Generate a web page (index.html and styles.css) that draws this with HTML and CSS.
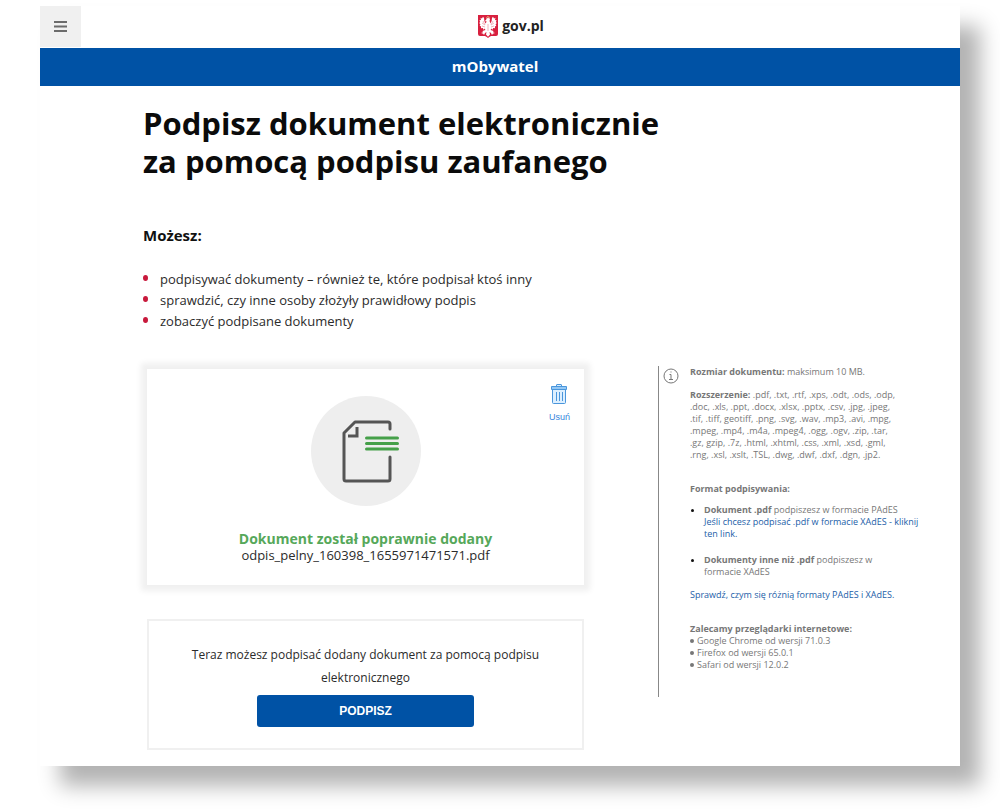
FILE: index.html
```html
<!DOCTYPE html>
<html lang="pl">
<head>
  <meta charset="UTF-8">
  <meta name="viewport" content="width=device-width, initial-scale=1">
  <title>Podpisz dokument elektronicznie - mObywatel</title>
  <link rel="stylesheet" href="styles.css">
</head>
<body>

<div class="page">
  <header class="top">
    <button type="button" class="menu-btn" aria-label="Menu">
      <svg width="13" height="11" viewBox="0 0 13 11"><path d="M0 1h13M0 5.500h13M0 10h13" stroke="#6b6b6b" stroke-width="2"/></svg>
    </button>
    <a href="#" class="logo">
      <svg width="20" height="24" viewBox="0 0 20 24" aria-hidden="true">
        <path d="M0 0h20v19q0 2-2 2h-5q-2 1-3 2-1-1-3-2H2q-2 0-2-2z" fill="#d8203f"/>
        <g fill="#fff">
          <path d="M8 5L9 2.500 10 3.500 11 2.300 12 4.500 11.500 6 12.500 8.500Q14 6 14 3L15 1.800 16 3.500 17.500 2.800 17 5 18.600 5.200 17.800 7 18.800 8 17.600 9.200 18.300 10.800 16.900 11.400 17 13.200 15.200 13 14.500 14.800 13.300 13.600 12.600 15 15.500 16 15 17.300 17 18 14.800 18.800 14 20 13 18 11.500 17 12 19.500 10 21.800 8 19.500 8.500 17 7 18 6 20 5.200 18.800 3 18 5 17.300 4.500 16 7.400 15 6.700 13.600 5.500 14.800 4.800 13 3 13.200 3.100 11.400 1.700 10.800 2.400 9.200 1.200 8 2.200 7 1.400 5.200 3 5 2.500 2.800 4 3.500 5 1.800 6 3Q6 6 7.500 8.500L8.700 6.500 6.800 6Z"/>
        </g>
        <path d="M5 6l2 4-3-2M15 6l-2 4 3-2M4 11l3 1M16 11l-3 1M10 9v7" fill="none" stroke="#f0b4be" stroke-width="1"/>
        <path d="M8.500 2.500l1-.8.700.6.700-.6.700.8" fill="none" stroke="#e8c77a" stroke-width="1"/>
      </svg>
      <span>gov.pl</span>
    </a>
  </header>

  <div class="service-bar">mObywatel</div>

  <main>
    <h1>Podpisz dokument elektronicznie<br>za pomocą podpisu zaufanego</h1>

    <h2>Możesz:</h2>
    <ul class="options">
      <li>podpisywać dokumenty – również te, które podpisał ktoś inny</li>
      <li>sprawdzić, czy inne osoby złożyły prawidłowy podpis</li>
      <li>zobaczyć podpisane dokumenty</li>
    </ul>

    <div class="columns">
      <div class="left">
        <section class="card file-card">
          <div class="doc-icon">
            <svg width="110" height="110" viewBox="0 0 110 110" fill="none" stroke-linecap="round" stroke-linejoin="round">
              <g stroke="#555" stroke-width="3">
                <path d="M79 33V28q0-2-2-2H44L33 37V83q0 2 2 2H77q2 0 2-2V61"/>
                <path d="M46 31v9h-9" stroke-linecap="butt" stroke-linejoin="miter"/>
              </g>
              <path d="M55.500 42h31M55.500 47.500h31M55.500 53h31" stroke="#45a049" stroke-width="3"/>
            </svg>
          </div>
          <button type="button" class="delete-btn">
            <svg width="16" height="20" viewBox="0 0 16 20" fill="#dcefff" stroke="#4a96dc">
              <path d="M5.500 2.500V1q0-.5.500-.5h4q.5 0 .5.500v1.500"/>
              <path d="M1.500 5.500h13v13q0 1-1 1h-11q-1 0-1-1z"/>
              <path d="M.5 2.500h15v3H.5z" fill="#94c8f5"/>
              <path d="M5.500 8v9M8.500 8v9M11.500 8v9"/>
            </svg>
            <span>Usuń</span>
          </button>
          <div class="status">
            <strong>Dokument został poprawnie dodany</strong>
            <span>odpis_pelny_160398_1655971471571.pdf</span>
          </div>
        </section>

        <section class="card sign-card">
          <p>Teraz możesz podpisać dodany dokument za pomocą podpisu elektronicznego</p>
          <button type="button" class="sign-btn">PODPISZ</button>
        </section>
      </div>

      <aside class="info">
        <svg class="info-icon" width="16" height="16" viewBox="0 0 16 16" fill="none" stroke="#777">
          <circle cx="8" cy="8" r="7"/>
          <path d="M6.500 6.500H8v5M6 11.500h4M7.500 4h1"/>
        </svg>
        <div class="info-text">
          <p><strong>Rozmiar dokumentu:</strong> maksimum 10 MB.</p>
          <p class="extensions"><strong>Rozszerzenie:</strong> .pdf, .txt, .rtf, .xps, .odt, .ods, .odp, .doc, .xls, .ppt, .docx, .xlsx, .pptx, .csv, .jpg, .jpeg, .tif, .tiff, geotiff, .png, .svg, .wav, .mp3, .avi, .mpg, .mpeg, .mp4, .m4a, .mpeg4, .ogg, .ogv, .zip, .tar, .gz, gzip, .7z, .html, .xhtml, .css, .xml, .xsd, .gml, .rng, .xsl, .xslt, .TSL, .dwg, .dwf, .dxf, .dgn, .jp2.</p>
          <h3>Format podpisywania:</h3>
          <ul class="formats">
            <li><strong>Dokument .pdf</strong> podpiszesz w formacie PAdES<br><a href="#">Jeśli chcesz podpisać .pdf w formacie XAdES - kliknij<br>ten link.</a></li>
            <li><strong>Dokumenty inne niż .pdf</strong> podpiszesz w<br>formacie XAdES</li>
          </ul>
          <p><a href="#">Sprawdź, czym się różnią formaty PAdES i XAdES.</a></p>
          <h3>Zalecamy przeglądarki internetowe:</h3>
          <ul class="browsers">
            <li>Google Chrome od wersji 71.0.3</li>
            <li>Firefox od wersji 65.0.1</li>
            <li>Safari od wersji 12.0.2</li>
          </ul>
        </div>
      </aside>
    </div>
  </main>
</div>

</body>
</html>
```
FILE: styles.css
```css
* {
  box-sizing: border-box;
}
body {
  margin: 0;
  padding: 6px 40px 43px;
  background: #fff;
  color: #2b2b2b;
  font-family: "Open Sans", "Noto Sans", sans-serif;
  font-size: 13px;
}
h1, h2, h3, p, ul {
  margin: 0;
  padding: 0;
}
ul {
  list-style: none;
}
button {
  border: none;
  cursor: pointer;
}
svg {
  display: block;
}
a {
  color: #1c5ea8;
  text-decoration: none;
}
.page {
  background: #fff;
  box-shadow: 20px 20px 20px rgba(0, 0, 0, 0.3);
}

/* header */
.top {
  display: grid;
  grid-template-columns: 1fr auto 1fr;
  height: 42px;
}
.menu-btn {
  display: flex;
  align-items: center;
  justify-content: center;
  width: 41px;
  height: 41px;
  padding: 0;
  background: #f0f0f0;
}
.logo {
  display: flex;
  align-items: flex-start;
  gap: 4px;
  padding: 9px 0 0 22px;
  color: #222;
  font-size: 14px;
  font-weight: 700;
  line-height: 21px;
}
.service-bar {
  padding: 0 10px 2px 0;
  background: #0052a5;
  color: #fff;
  font-size: 15px;
  font-weight: 700;
  line-height: 36px;
  text-align: center;
}

/* content */
main {
  padding: 18px 24px 16px 103px;
}
h1 {
  color: #0b0b0b;
  font-size: 31px;
  font-weight: 700;
  line-height: 38px;
}
h2 {
  margin-top: 45px;
  color: #111;
  font-size: 15px;
  line-height: 20px;
}
.options {
  margin-top: 24px;
  line-height: 21px;
}
.options li {
  display: flex;
  gap: 12px;
}
.options li::before {
  content: "";
  flex: none;
  width: 5px;
  height: 6px;
  margin-top: 6px;
  border-radius: 50%;
  background: #c8193c;
}
.columns {
  display: grid;
  grid-template-columns: 437fr 278fr;
  gap: 74px;
  align-items: start;
  margin-top: 34px;
  padding-left: 4px;
}
.left {
  display: grid;
  gap: 34px;
  padding-top: 3px;
}
.card {
  background: #fff;
}

.file-card {
  display: grid;
  grid-template-columns: 1fr auto 1fr;
  padding: 27px 14px 21px;
  box-shadow: 0 0 6px 6px #f0f0f0;
}
.doc-icon {
  grid-column: 2;
  border-radius: 50%;
  background: #eee;
}
.delete-btn {
  display: grid;
  justify-items: center;
  align-self: start;
  justify-self: end;
  gap: 8px;
  margin-top: -12px;
  padding: 0;
  background: none;
  color: #3585dc;
  font-family: "Liberation Sans", Arial, sans-serif;
  font-size: 9px;
}
.status {
  grid-column: 1 / -1;
  display: grid;
  margin-top: 24px;
  line-height: 17px;
  text-align: center;
}
.status strong {
  color: #56a85a;
  font-size: 14px;
}

.sign-card {
  padding: 22px 40px 21px;
  border: 2px solid #f0f0f0;
  font-size: 12px;
  line-height: 23px;
  text-align: center;
}
.sign-btn {
  width: 217px;
  height: 32px;
  margin-top: 6px;
  border-radius: 3px;
  background: #0052a5;
  color: #fff;
  font-family: "Liberation Sans", Arial, sans-serif;
  font-size: 12px;
  font-weight: 700;
}

/* side notes */
.info {
  display: flex;
  align-items: flex-start;
  gap: 11px;
  padding: 0 0 26px 4px;
  border-left: 1px solid #888;
  color: #777;
  font-size: 9px;
  line-height: 12px;
}
.info-icon {
  flex: none;
  margin-top: 2px;
}
.info h3 {
  margin-top: 22px;
  font-size: 9px;
}
.extensions {
  max-width: 210px;
  margin-top: 11px;
}
.formats {
  margin: 9px 0 11px;
  padding-left: 14px;
  list-style: disc;
}
.formats li + li {
  margin-top: 14px;
}
.formats li::marker {
  color: #111;
}
.browsers li {
  display: flex;
  align-items: center;
  gap: 3px;
}
.browsers li::before {
  content: "";
  width: 4px;
  height: 4px;
  border-radius: 50%;
  background: #777;
}
```
